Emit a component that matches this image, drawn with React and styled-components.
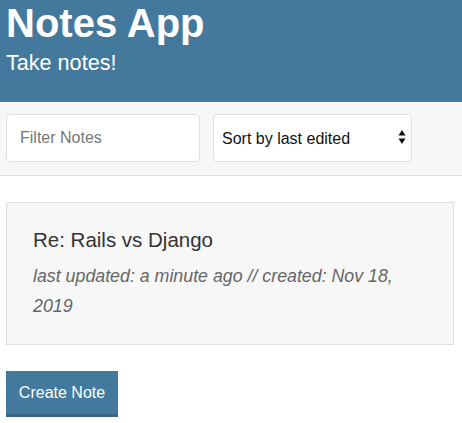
import React, { useState } from 'react';
import styled, { createGlobalStyle } from 'styled-components';

const GlobalStyle = createGlobalStyle`
    * {
        box-sizing: border-box;
    }
    body {
        margin: 0;
        font-family: 'Liberation Sans', Arial, Helvetica, sans-serif;
        font-size: 16px;
        color: #333;
        background: #fff;
    }
`;

const Header = styled.header`
    background: #43799c;
    color: #fff;
    padding: 0 6px 27px;
`;

const HeaderTitle = styled.h1`
    margin: 0;
    font-size: 40px;
    line-height: 46px;
    font-weight: bold;
`;

const HeaderSubtitle = styled.h2`
    margin: 5px 0 0;
    font-size: 21.6px;
    line-height: 24px;
    font-weight: normal;
`;

const FilterBar = styled.div`
    display: flex;
    align-items: center;
    gap: 13px;
    background: #f7f7f7;
    border-bottom: 1px solid #dedfe0;
    padding: 12px 6px 13px;
`;

const FilterInput = styled.input`
    width: 194px;
    height: 48px;
    border: 1px solid #dedfe0;
    border-radius: 4px;
    background: #fff;
    padding: 0 13px;
    font: inherit;
    font-size: 16px;
    color: #333;
    outline: none;

    &::placeholder {
        color: #777;
    }
`;

const SelectWrap = styled.div`
    position: relative;
    width: 199px;
    height: 48px;
`;

const SortSelect = styled.select`
    appearance: none;
    -webkit-appearance: none;
    width: 100%;
    height: 100%;
    border: 1px solid #dedfe0;
    border-radius: 4px;
    background: #fff;
    padding: 0 24px 0 8px;
    font: inherit;
    font-size: 16px;
    color: #111;
    outline: none;
`;

const SelectArrows = styled.svg`
    position: absolute;
    right: 6px;
    top: 16px;
    pointer-events: none;
`;

const Content = styled.main`
    padding: 26px 8px 0 6px;
    display: flex;
    flex-direction: column;
    align-items: flex-start;
    gap: 26px;
`;

const NoteCard = styled.div`
    width: 100%;
    background: #f7f7f7;
    border: 1px solid #dedfe0;
    padding: 25px 26px 23px;
`;

const NoteTitle = styled.h3`
    margin: 0;
    font-size: 20.5px;
    line-height: 24px;
    font-weight: normal;
    color: #333;
`;

const NoteMeta = styled.p`
    margin: 9px 0 0;
    font-size: 17.8px;
    line-height: 30px;
    font-style: italic;
    color: #666;
`;

const Button = styled.button`
    background: #43799c;
    color: #fff;
    border: none;
    border-bottom: 3px solid #386583;
    padding: 0 12px;
    height: 46px;
    width: 112px;
    font: inherit;
    font-size: 16px;
    line-height: 43px;
    cursor: pointer;
`;

export default function App() {
    const [filter, setFilter] = useState('');
    const [sortBy, setSortBy] = useState('byEdited');

    return (
        <>
            <GlobalStyle />
            <Header>
                <HeaderTitle>Notes App</HeaderTitle>
                <HeaderSubtitle>Take notes!</HeaderSubtitle>
            </Header>
            <FilterBar>
                <FilterInput
                    placeholder="Filter Notes"
                    value={filter}
                    onChange={e => setFilter(e.target.value)}
                />
                <SelectWrap>
                    <SortSelect value={sortBy} onChange={e => setSortBy(e.target.value)}>
                        <option value="byEdited">Sort by last edited</option>
                        <option value="byCreated">Sort by recently created</option>
                        <option value="alphabetical">Sort alphabetically</option>
                    </SortSelect>
                    <SelectArrows width="8" height="15" viewBox="0 0 8 15">
                        <path d="M4 0 L7.5 5.5 L0.5 5.5 Z" fill="#111" />
                        <path d="M4 14 L7.5 8.5 L0.5 8.5 Z" fill="#111" />
                    </SelectArrows>
                </SelectWrap>
            </FilterBar>
            <Content>
                <NoteCard>
                    <NoteTitle>Re: Rails vs Django</NoteTitle>
                    <NoteMeta>last updated: a minute ago // created: Nov 18, 2019</NoteMeta>
                </NoteCard>
                <Button>Create Note</Button>
            </Content>
        </>
    );
}
